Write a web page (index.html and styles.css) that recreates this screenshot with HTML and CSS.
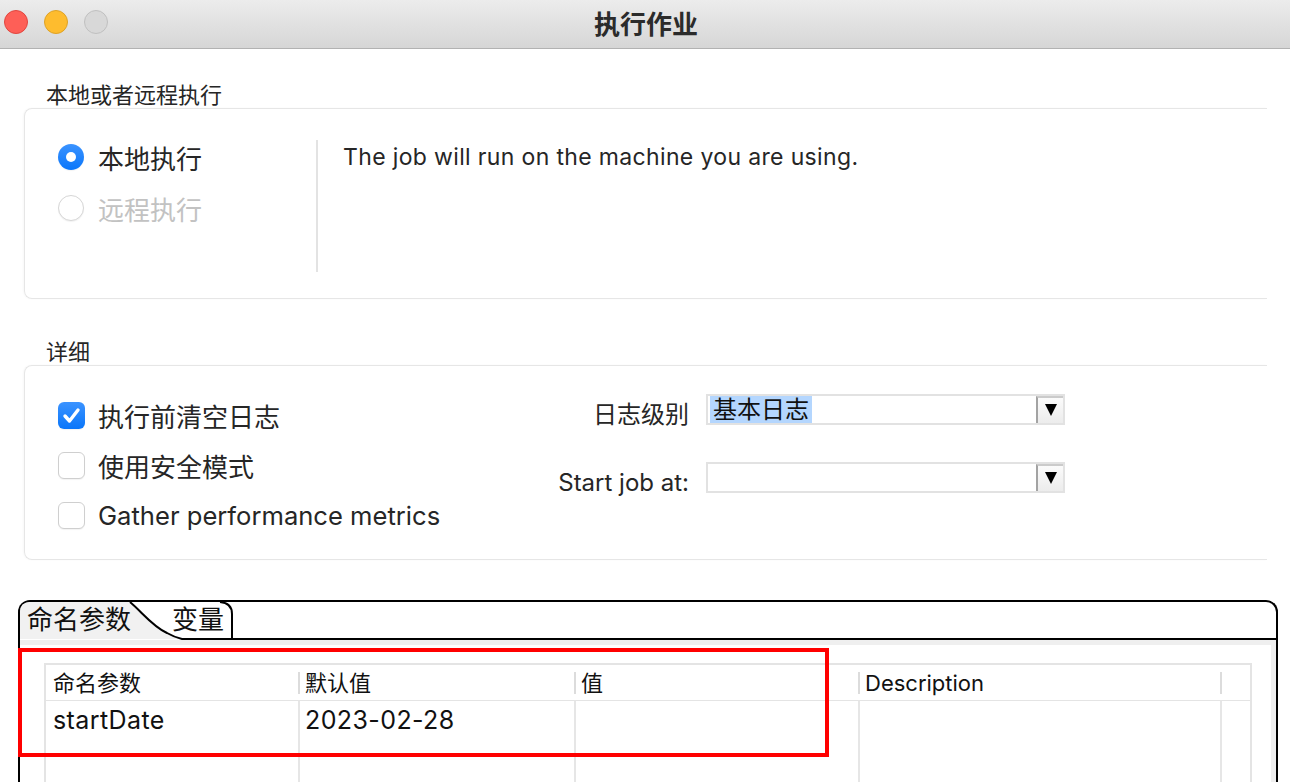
FILE: index.html
```html
<!DOCTYPE html>
<html lang="zh">
<head>
  <meta charset="UTF-8">
  <title>执行作业</title>
  <link rel="stylesheet" href="styles.css">
</head>
<body>

<div class="titlebar">
  <div class="lights">
    <span class="light red"></span>
    <span class="light yellow"></span>
    <span class="light gray"></span>
  </div>
  <div class="title">执行作业</div>
</div>

<div class="main">
  <div class="group-label">本地或者远程执行</div>
  <div class="group run-group">
    <div class="radios">
      <div class="option"><span class="radio checked"></span>本地执行</div>
      <div class="option disabled"><span class="radio"></span>远程执行</div>
    </div>
    <div class="run-desc">The job will run on the machine you are using.</div>
  </div>

  <div class="group-label second">详细</div>
  <div class="group detail-group">
    <div class="checks">
      <div class="option">
        <span class="checkbox checked">
          <svg width="27" height="27" viewBox="0 0 27 27"><path d="M7 14 L11.5 19 L20 8" fill="none" stroke="#fff" stroke-width="3.4" stroke-linecap="round" stroke-linejoin="round"/></svg>
        </span>执行前清空日志
      </div>
      <div class="option"><span class="checkbox"></span>使用安全模式</div>
      <div class="option latin"><span class="checkbox"></span>Gather performance metrics</div>
    </div>
    <div class="fields">
      <div class="field-label">日志级别</div>
      <div class="select">
        <span class="select-value"><span class="selected">基本日志</span></span>
        <span class="select-btn"><span class="arrow"></span></span>
      </div>
      <div class="field-label">Start job at:</div>
      <div class="select">
        <span class="select-value"></span>
        <span class="select-btn"><span class="arrow"></span></span>
      </div>
    </div>
  </div>

  <div class="tabpanel">
    <div class="tabs">
      <svg class="tab-lines" width="1256" height="38">
        <path d="M0,36 L0,10 Q0,0 10,0 L110,0 C122,10 132,24 147,31 Q154,35 162,37 L0,37 Z" fill="#f1f1f1"/>
        <path d="M110,0 C122,10 132,24 147,31 Q154,35 162,37 L1256,37" fill="none" stroke="#000" stroke-width="2"/>
        <path d="M212,37 L212,12 Q212,1 200,0" fill="none" stroke="#000" stroke-width="2"/>
      </svg>
      <span class="tab active">命名参数</span>
      <span class="tab">变量</span>
    </div>
    <div class="tabbody">
      <div class="params">
        <div class="head">命名参数</div>
        <div class="head">默认值</div>
        <div class="head">值</div>
        <div class="head">Description</div>
        <div class="head"></div>
        <div class="cell">startDate</div>
        <div class="cell">2023-02-28</div>
        <div class="cell"></div>
        <div class="cell"></div>
        <div class="cell"></div>
      </div>
    </div>
    <div class="annotation"></div>
  </div>
</div>

</body>
</html>
```

FILE: styles.css
```css
* {
  box-sizing: border-box;
}

html, body {
  height: 782px;
  overflow: hidden;
}

body {
  margin: 0;
  background-color: white;
  font-family: Inter, 'Noto Sans CJK SC', sans-serif;
  color: #262626;
}

.titlebar {
  height: 49px;
  background: linear-gradient(#ececec, #d6d6d6);
  border-bottom: 1px solid #b2b2b2;
  display: flex;
  align-items: center;
  position: relative;
}

.lights {
  display: flex;
  gap: 16px;
  padding-left: 4px;
  margin-top: -4px;
}

.light {
  width: 24px;
  height: 24px;
  border-radius: 50%;
  display: block;
}

.light.red {
  background-color: #fe5f57;
  border: 1px solid #e1463f;
}

.light.yellow {
  background-color: #febc2e;
  border: 1px solid #dea226;
}

.light.gray {
  background-color: #d8d8d8;
  border: 1px solid #c0c0c0;
}

.title {
  flex: 1;
  text-align: center;
  font-size: 26px;
  font-weight: bold;
  color: #2b2b2b;
  margin-left: -106px;
  margin-top: -4px;
}

.main {
  padding: 33px 23px 0 24px;
}

.group-label {
  font-size: 22px;
  line-height: 26px;
  padding-left: 22px;
}

.group-label.second {
  margin-top: 40px;
}

/* the boxes run off to the right, so no right edge is drawn */
.group {
  border: 1px solid #e6e6e6;
  border-right: none;
  border-radius: 8px 0 0 8px;
  box-shadow: -1px 0 2px rgba(0, 0, 0, 0.03);
  display: flex;
}

.option {
  height: 34px;
  display: flex;
  align-items: center;
  gap: 14px;
  font-size: 26px;
}

.option.latin {
  font-size: 25.6px;
}

.option.disabled {
  color: #c2c2c2;
}

.run-group {
  height: 191px;
}

.radios {
  width: 291px;
  padding: 31px 0 0 33px;
  display: flex;
  flex-direction: column;
  gap: 17px;
}

.radio {
  width: 26px;
  height: 26px;
  border-radius: 50%;
  border: 1px solid #d6d6d6;
  background-color: white;
  box-shadow: 0 1px 1px rgba(0, 0, 0, 0.05);
  display: flex;
  align-items: center;
  justify-content: center;
}

.radio.checked {
  border: none;
  background: linear-gradient(#3b93ff, #0a76fa);
}

.radio.checked::after {
  content: '';
  width: 10px;
  height: 10px;
  border-radius: 50%;
  background-color: white;
}

.run-desc {
  margin-top: 31px;
  height: 132px;
  border-left: 2px solid #e3e3e3;
  padding-left: 25px;
  font-size: 23px;
  letter-spacing: 0.35px;
  line-height: 34px;
}

.detail-group {
  height: 195px;
}

.checks {
  width: 500px;
  padding: 32px 0 0 33px;
  display: flex;
  flex-direction: column;
  gap: 16px;
}

.checkbox {
  width: 27px;
  height: 27px;
  border-radius: 6px;
  border: 1px solid #cfcfcf;
  background-color: white;
  box-shadow: 0 1px 1px rgba(0, 0, 0, 0.05);
  display: block;
  flex-shrink: 0;
  margin-right: -1px;
}

.checkbox.checked {
  border: none;
  background: linear-gradient(#3b93ff, #0a76fa);
}

.checkbox svg {
  display: block;
}

.fields {
  padding-top: 28px;
  display: grid;
  grid-template-columns: 164px 359px;
  grid-auto-rows: 31px;
  column-gap: 17px;
  row-gap: 37px;
  align-content: start;
}

.field-label {
  text-align: right;
  font-size: 24px;
  line-height: 30px;
  margin-top: 6px;
  white-space: nowrap;
}

.select {
  height: 31px;
  border: 2px solid #e2e2e2;
  display: flex;
  background-color: white;
}

.select-value {
  flex: 1;
  padding-left: 2px;
  font-size: 24px;
  line-height: 27px;
  color: #111;
}

.selected {
  background-color: #b4d6fe;
  display: inline-block;
  height: 27px;
  padding: 0 3px 0 3px;
}

.select-btn {
  width: 27px;
  border-left: 2px solid #a3a3a3;
  border-top: 2px solid #cbcbcb;
  background: linear-gradient(#fbfbfb, #ececec);
  display: flex;
  align-items: center;
  justify-content: center;
}

.arrow {
  width: 0;
  height: 0;
  border-left: 6px solid transparent;
  border-right: 6px solid transparent;
  border-top: 12px solid #000;
  margin-top: -1px;
}

.tabpanel {
  margin: 40px -11px 0 -6px;
  height: 190px;
  border: 2px solid #000;
  border-bottom: none;
  border-radius: 12px 12px 0 0;
  position: relative;
}

.tabs {
  height: 38px;
  position: relative;
  display: flex;
  align-items: flex-start;
  gap: 41px;
  padding-left: 7px;
}

.tab-lines {
  position: absolute;
  left: 0;
  top: 0;
  overflow: visible;
}

.tab {
  position: relative;
  font-size: 26px;
  line-height: 36px;
  color: #111;
}

.tabbody {
  border-top: 5px solid #efefef;
  border-right: 5px solid #efefef;
  height: 150px;
  padding: 18px 19px 0 24px;
}

.params {
  border: 2px solid #e4e4e4;
  border-bottom: none;
  display: grid;
  grid-template-columns: 252px 276px 284px 362px 1fr;
  grid-template-rows: 35px 100px;
}

.head {
  margin-top: 7px;
  height: 22px;
  line-height: 22px;
  font-size: 22px;
  padding-left: 5px;
  border-left: 2px solid #dcdcdc;
  color: #111;
}

.head:first-child {
  border-left: none;
  padding-left: 7px;
}

.cell {
  border-top: 1px solid #e4e4e4;
  border-left: 2px solid #e6e6e6;
  padding-left: 5px;
  font-size: 25px;
  letter-spacing: 0.4px;
  line-height: 38px;
  color: #111;
}

.cell:nth-child(6) {
  border-left: none;
  padding-left: 7px;
}

.annotation {
  position: absolute;
  left: -2px;
  top: 46px;
  width: 811px;
  height: 109px;
  border: 4px solid #ff0000;
}
```
